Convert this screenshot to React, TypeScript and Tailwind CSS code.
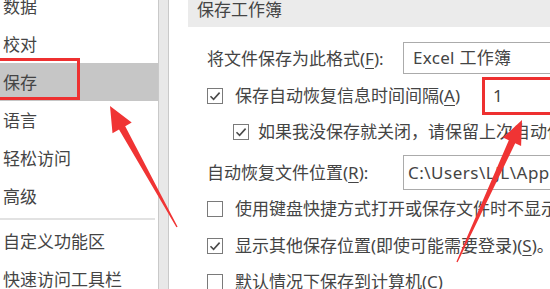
const font = { fontFamily: '"Noto Sans", "Noto Sans CJK SC", sans-serif' };

function Checkbox({ checked }: { checked?: boolean }) {
  return (
    <svg width="16" height="16" viewBox="0 0 16 16" className="shrink-0">
      <rect x="0.5" y="0.5" width="15" height="15" fill="#fff" stroke="#7a7a7a" />
      {checked && <path d="M3.5 8.2 L6.6 11.3 L12.6 4.6" fill="none" stroke="#4a4a4a" strokeWidth="1.6" />}
    </svg>
  );
}

function U({ children }: { children: string }) {
  return <span className="underline underline-offset-[3px] decoration-1">{children}</span>;
}

const navItems = ['数据', '校对', '保存', '语言', '轻松访问', '高级'];

export default function App() {
  return (
    <div className="relative w-[550px] h-[289px] overflow-hidden bg-white text-[17px] text-[#444]" style={font}>
      <div className="flex h-full">
        {/* left nav */}
        <div className="w-[158px] shrink-0">
          <div className="-mt-[13px]">
            {navItems.map((t) => (
              <div key={t} className={`h-[38px] flex items-center pl-[3px] pt-[2px] ${t === '保存' ? 'bg-[#c6c6c6]' : ''}`}>
                {t}
              </div>
            ))}
            <div className="h-[2px] mt-[3px] mb-[2px] mr-[3px] bg-[#e2e2e2]" />
            <div className="h-[38px] flex items-center pl-[3px] pt-[2px]">自定义功能区</div>
            <div className="h-[38px] flex items-center pl-[3px] pt-[2px]">快速访问工具栏</div>
          </div>
        </div>

        {/* scrollbar track */}
        <div className="w-[11px] shrink-0 bg-[#e8e8e8] border-x border-[#c9c9c9]" />

        {/* right pane */}
        <div className="flex-1 pl-[19px] whitespace-nowrap">
          <div className="h-[27px] bg-[#ebebeb] pl-[9px] leading-[20px]">保存工作簿</div>

          <div className="mt-[15px] h-[32px] flex items-center">
            <div className="w-[215px] pl-[19px] pt-[2px]">将文件保存为此格式(<U>F</U>):</div>
            <div className="flex-1 h-full border border-[#ababab] flex items-center pl-[9px] tracking-[0.3px]">Excel 工作簿</div>
          </div>

          <div className="mt-[3px] h-[38px] flex items-center">
            <div className="w-[294px] pl-[19px] flex items-center gap-[12px]">
              <Checkbox checked />
              <span>保存自动恢复信息时间间隔(<U>A</U>)</span>
            </div>
            <div className="flex-1 h-full border-[3px] border-[#ee3030] flex items-center pl-[8px]">1</div>
          </div>

          <div className="h-[34px] flex items-center gap-[9px] pl-[45px]">
            <Checkbox checked />
            <span>如果我没保存就关闭，请保留上次自动保存的版本</span>
          </div>

          <div className="mt-[6px] h-[35px] flex items-center">
            <div className="w-[215px] pl-[19px]">自动恢复文件位置(<U>R</U>):</div>
            <div className="flex-1 h-full border border-[#ababab] flex items-center pl-[4px] tracking-[0.5px]">C:\Users\LJL\AppData\Roaming\Microsoft\Excel\</div>
          </div>

          <div className="h-[38px] flex items-center gap-[12px] pl-[19px]">
            <Checkbox />
            <span>使用键盘快捷方式打开或保存文件时不显示 Backstage(<U>O</U>)</span>
          </div>

          <div className="h-[36px] flex items-center gap-[12px] pl-[19px]">
            <Checkbox checked />
            <span>显示其他保存位置(即使可能需要登录)(<U>S</U>)。</span>
          </div>

          <div className="h-[36px] flex items-center gap-[12px] pl-[19px]">
            <Checkbox />
            <span>默认情况下保存到计算机(<U>C</U>)</span>
          </div>
        </div>
      </div>

      {/* annotation: red box around 保存 */}
      <div className="absolute left-[-3px] top-[58px] w-[83px] h-[42px] border-[3px] border-[#ee3030]" />

      {/* annotation arrows */}
      <svg className="absolute inset-0 pointer-events-none" width="550" height="289" viewBox="0 0 550 289">
        <polygon
          fill="#f03434"
          points="110,106 131.7,122.6 125.2,126.2 177.6,226.7 176.4,227.3 119,129.6 112.5,133.2"
        />
        <polygon
          fill="#f03434"
          points="522,120 521.1,146 515.2,143.3 457.6,262.3 456.4,261.7 508.8,140.3 502.9,137.6"
        />
      </svg>
    </div>
  );
}
